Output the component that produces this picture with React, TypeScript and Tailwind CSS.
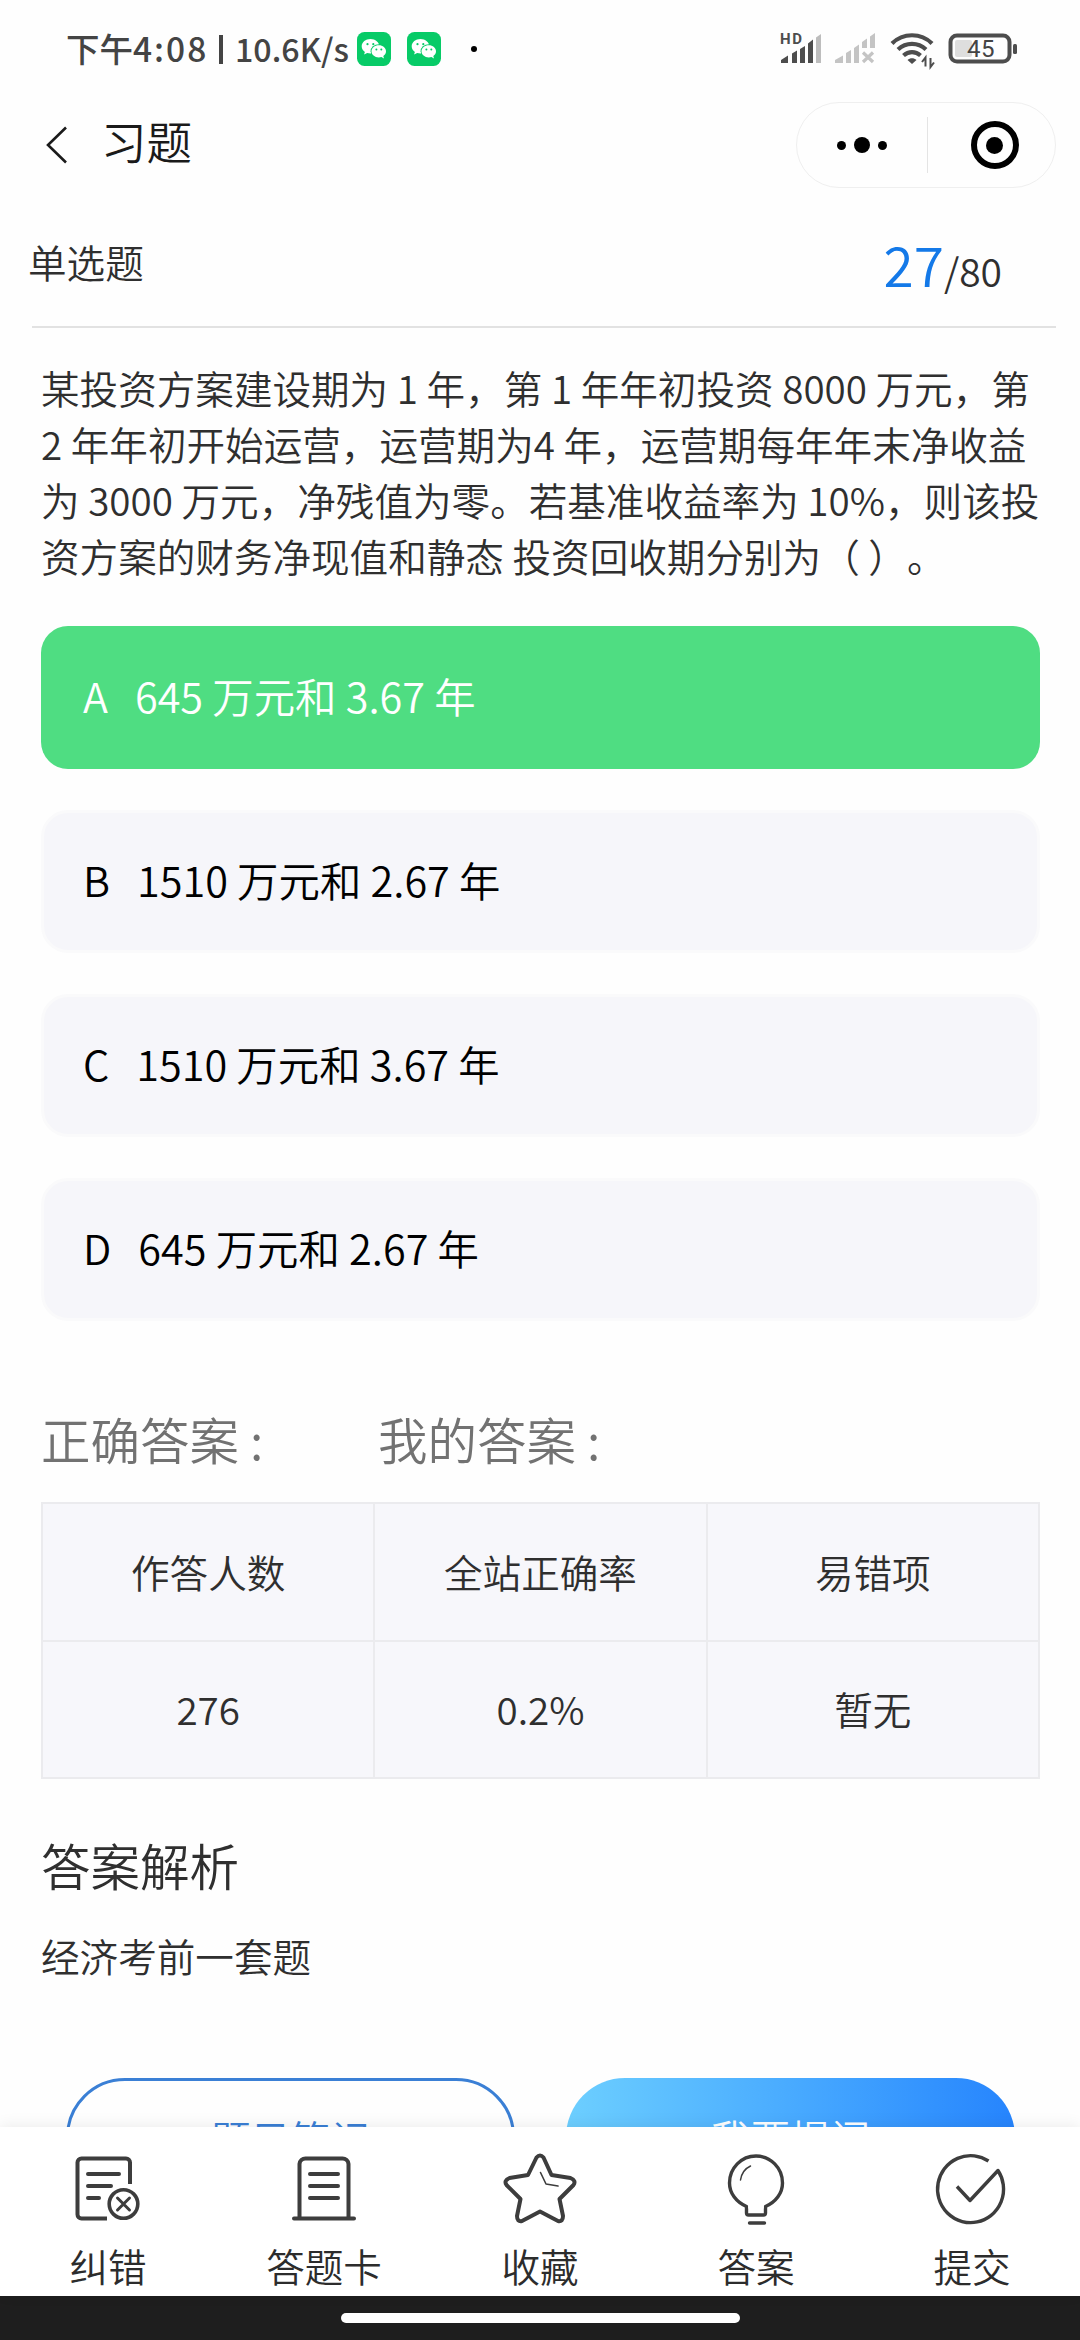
import React from 'react';

const options = [
    { key: 'A', text: '645 万元和 3.67 年', active: true },
    { key: 'B', text: '1510 万元和 2.67 年', active: false },
    { key: 'C', text: '1510 万元和 3.67 年', active: false },
    { key: 'D', text: '645 万元和 2.67 年', active: false },
];

const stats = [
    ['作答人数', '全站正确率', '易错项'],
    ['276', '0.2%', '暂无'],
];

const WeChatIcon: React.FC = () => (
    <svg width="34" height="34" viewBox="0 0 34 34">
        <rect width="34" height="34" rx="7.5" fill="#07cb67" />
        <path d="M13.5 7C8.6 7 4.7 10.2 4.7 14.3c0 2.3 1.2 4.3 3.2 5.6l-.9 2.7 3.2-1.6c1 .3 2.1.5 3.3.5 4.9 0 8.8-3.2 8.8-7.2S18.4 7 13.5 7z" fill="#fff" />
        <ellipse cx="21.8" cy="19.3" rx="8.2" ry="7" fill="#07cb67" />
        <path d="M21.8 13.2c-4.1 0-7.3 2.7-7.3 6.1s3.2 6.1 7.3 6.1c.9 0 1.8-.1 2.6-.4l2.6 1.4-.7-2.3c1.7-1.1 2.7-2.8 2.7-4.8 0-3.4-3.2-6.1-7.2-6.1z" fill="#fff" />
        <g fill="#07cb67">
            <circle cx="10.5" cy="12.2" r="1.1" />
            <circle cx="16.3" cy="12.2" r="1.1" />
            <circle cx="19.4" cy="17.6" r="1" />
            <circle cx="24.3" cy="17.6" r="1" />
        </g>
    </svg>
);

const StatusBar: React.FC = () => (
    <div className="flex h-[98px] shrink-0 items-center justify-between pl-[66px] pr-[60px] text-[#444444]">
        <div className="flex items-center leading-none">
            <span className="w-[146px] whitespace-nowrap pb-[2px] text-[33.5px] font-medium">
                下午<span className="tracking-[2px]">4:08</span>
            </span>
            <span className="ml-[7px] h-[29px] w-[4px] bg-[#444444]" />
            <span className="ml-[12px] w-[121px] whitespace-nowrap pb-[2px] text-[32.2px] font-medium">10.6K/s</span>
            <div className="ml-px flex items-center gap-4">
                <WeChatIcon />
                <WeChatIcon />
            </div>
            <span className="ml-[30px] h-[6px] w-[6px] rounded-full bg-black" />
        </div>
        <svg className="mt-[4px]" width="240" height="40" viewBox="0 0 240 40">
            <text x="0" y="12.5" fontSize="15" fontWeight="700" fill="#4d4d4d" fontFamily="Roboto, sans-serif" textLength="22">HD</text>
            <path d="M1 32v-3l7-4.5V32zM12 32v-9.5l5-3V32zM20 32V18l5-3v17zM28 32V12.5l5-4V32z" fill="#4d4d4d" />
            <path d="M36 32V6.5L41 3v29z" fill="#bdbdbd" />
            <path d="M55 32v-3l8-4.5V32zM66 32V22l5-3v13zM74 32V17l5-3.5V32zM82 17v-6l5-3.5V17zM90 17V5.500L95 2v15z" fill="#c4c4c4" />
            <path d="M83 21.5l10 9.500M93 21.500L83 31" stroke="#c4c4c4" strokeWidth="3.2" />
            <g fill="none" stroke="#4d4d4d" strokeWidth="4.2">
                <path d="M112 12.5c11-11 29-11 40 0" />
                <path d="M118 18.5c8-7.5 20-7.5 28 0" />
                <path d="M123.5 24.5c5-4.5 12-4.5 17 0" />
            </g>
            <path d="M132 33l-4.5-4c2.5-2.3 6.5-2.3 9 0z" fill="#4d4d4d" />
            <path d="M145.5 35.5v-9l-3.5 4.5M150.5 27v9l3.5-4.5" fill="none" stroke="#4d4d4d" strokeWidth="2" />
            <rect x="170.5" y="4.5" width="59" height="26" rx="6.5" fill="none" stroke="#4d4d4d" strokeWidth="4" />
            <rect x="175" y="9" width="17" height="17" rx="2" fill="#dedede" />
            <rect x="233" y="13" width="4" height="10" rx="1.5" fill="#4d4d4d" />
            <text x="201" y="26" fontSize="24" fontWeight="400" textAnchor="middle" fill="#444444" fontFamily="Roboto, sans-serif" letterSpacing="0.5">45</text>
        </svg>
    </div>
);

const TitleBar: React.FC = () => (
    <header className="flex h-[94px] shrink-0 items-center pl-[46px] pr-6 text-[#1a1a1a]">
        <svg width="21" height="38" viewBox="0 0 21 38" fill="none" stroke="#1a1a1a" strokeWidth="2.6">
            <path d="M20 1.5L2 19l18 17.5" />
        </svg>
        <h1 className="ml-[34px] pb-[8px] text-[45.5px] leading-none">习题</h1>
        <div className="ml-auto flex h-[86px] w-[260px] items-center rounded-full border border-[#efefef]">
            <div className="flex w-[130px] items-center justify-center gap-2">
                <span className="h-[9px] w-[9px] rounded-full bg-black" />
                <span className="h-4 w-4 rounded-full bg-black" />
                <span className="h-[9px] w-[9px] rounded-full bg-black" />
            </div>
            <span className="h-[56px] w-px bg-[#e4e4e4]" />
            <div className="flex flex-1 justify-center pl-[6px]">
                <span className="flex h-12 w-12 items-center justify-center rounded-full border-[6px] border-black">
                    <span className="h-[17px] w-[17px] rounded-full bg-black" />
                </span>
            </div>
        </div>
    </header>
);

const iconProps = {
    width: 76,
    height: 76,
    viewBox: '0 0 76 76',
    fill: 'none',
    stroke: '#3d3d3d',
    strokeWidth: 4,
    strokeLinecap: 'round' as const,
    strokeLinejoin: 'round' as const,
};

const tabs = [
    {
        label: '纠错',
        icon: (
            <svg {...iconProps}>
                <path d="M37 66.5H11.5a4 4 0 0 1-4-4v-52a4 4 0 0 1 4-4H56a4 4 0 0 1 4 4V32" strokeLinecap="butt" />
                <path d="M18 22h31M18 34h23M18 46h11" />
                <circle cx="53.5" cy="52" r="14.3" strokeWidth="3.6" />
                <path d="M47.5 46l12 12M59.5 46l-12 12" strokeWidth="3" />
            </svg>
        ),
    },
    {
        label: '答题卡',
        icon: (
            <svg {...iconProps}>
                <path d="M13.5 66V12a6 6 0 0 1 6-5.5h37a6 6 0 0 1 6 5.5v54" />
                <path d="M8 66.5h60M24 22h28M24 34h28M24 46h28" />
            </svg>
        ),
    },
    {
        label: '收藏',
        icon: (
            <svg {...iconProps}>
                <path d="M34.5 5.5q3.5-4 7 0L49.5 23l19 3q6 2.5 3 7l-14 14L61 64q0 6-5 5l-18-9.500L20 69q-5 1-5-5l3.500-17-14-14q-3-4.500 3-7l18.500-3z" />
                <path d="M38.5 20.5L44 32l12 2" strokeWidth="1.6" />
            </svg>
        ),
    },
    {
        label: '答案',
        icon: (
            <svg {...iconProps} strokeWidth={3.4}>
                <path d="M47.5 54.5V61q0 2-2 2h-15q-2 0-2-2v-6.5C18 50 11.500 41 11.500 31a26.500 27 0 0 1 53 0c0 10-6.500 19-17 23.500z" />
                <path d="M30.2 54.500h15.600" stroke="#fff" strokeWidth="4" strokeLinecap="butt" />
                <path d="M31.500 71h15" />
                <path d="M22.500 28q1.500-10 10-14" strokeWidth="1.5" />
            </svg>
        ),
    },
    {
        label: '提交',
        icon: (
            <svg {...iconProps} strokeWidth={3.4}>
                <path d="M54.5 9A33 33.5 0 1 0 64 18.5l-28 30-13-14" strokeLinecap="butt" />
            </svg>
        ),
    },
];

const TabBar: React.FC = () => (
    <nav className="relative flex h-[169px] shrink-0 bg-white shadow-[0_-2px_14px_rgba(0,0,0,0.07)]">
        {tabs.map((tab) => (
            <div key={tab.label} className="flex flex-1 flex-col items-center pt-[25px]">
                {tab.icon}
                <span className="mt-[17px] text-[38.6px] leading-[40px] text-[#2c2c2c]">{tab.label}</span>
            </div>
        ))}
    </nav>
);

export default function App() {
    return (
        <div className="flex h-[2340px] w-[1080px] flex-col overflow-hidden bg-[#fefefe] font-['Noto_Sans_CJK_SC',sans-serif] font-[350] text-[#2f2f2f]">
            <StatusBar />
            <TitleBar />

            <main className="min-h-0 flex-1 overflow-hidden">
                <div className="ml-8 mr-6 flex h-[136px] items-center justify-between border-b-2 border-[#e2e2e2] pr-[54px]">
                    <span className="-ml-1 mt-1 text-[38.6px] leading-none">单选题</span>
                    <span className="flex items-baseline pt-2 leading-none">
                        <span className="text-[55px] text-[#1479e8]">27</span>
                        <span className="text-[39px]">/80</span>
                    </span>
                </div>

                <div className="pl-[41px] pr-[40px]">
                    <p className="mt-[31px] whitespace-nowrap text-[38.6px] leading-[56px] [text-spacing-trim:space-all]">
                        某投资方案建设期为 1 年，第 1 年年初投资 8000 万元，第<br />
                        2 年年初开始运营，运营期为4 年，运营期每年年末净收益<br />
                        为 3000 万元，净残值为零。若基准收益率为 10%，则该投<br />
                        资方案的财务净现值和静态 投资回收期分别为（ ）。
                    </p>

                    <div className="mt-[43px] flex flex-col gap-[41px]">
                        {options.map((option) => (
                            <div
                                key={option.key}
                                className={
                                    option.active
                                        ? 'flex h-[143px] items-center rounded-[27px] bg-[#4fdd82] px-[42px] pb-[4px] text-[41.4px] text-white'
                                        : 'flex h-[143px] items-center rounded-[27px] border-[3px] border-[#fafafb] bg-[#f6f6fa] px-[39px] pb-[4px] text-[41.4px] text-black'
                                }
                            >
                                <span>{option.key}</span>
                                <span className="ml-[27px]">{option.text}</span>
                            </div>
                        ))}
                    </div>

                    <div className="mt-[82px] flex text-[49.5px] leading-[72px] text-[#727272]">
                        <span className="w-[337px] whitespace-nowrap">正确答案 :</span>
                        <span className="whitespace-nowrap">我的答案 :</span>
                    </div>

                    <div className="mt-[27px] grid grid-cols-3 border-l-2 border-t-2 border-[#ebebee] bg-[#f7f7fb] text-[38.6px]">
                        {stats.flat().map((cell) => (
                            <div key={cell} className="flex h-[137.5px] items-center justify-center border-b-2 border-r-2 border-[#ebebee]">
                                {cell}
                            </div>
                        ))}
                    </div>

                    <h2 className="mt-[50px] text-[49.5px] leading-[72px]">答案解析</h2>
                    <p className="mt-[26px] text-[38.6px] leading-[56px]">经济考前一套题</p>

                    <div className="mt-[95px] flex justify-between px-[25px] text-[40px]">
                        <button className="h-[118px] w-[449px] rounded-full border-[3px] border-[#3a7fd5] pt-[2px] text-[#3a7fd5]">题目笔记</button>
                        <button className="h-[118px] w-[449px] rounded-full bg-linear-to-r from-[#6dcfff] to-[#2684fd] text-white">我要提问</button>
                    </div>
                </div>
            </main>

            <TabBar />

            <div className="flex h-[44px] shrink-0 justify-center bg-[#1e1e1e] pt-[17px]">
                <span className="h-[10px] w-[399px] rounded-full bg-white" />
            </div>
        </div>
    );
}
